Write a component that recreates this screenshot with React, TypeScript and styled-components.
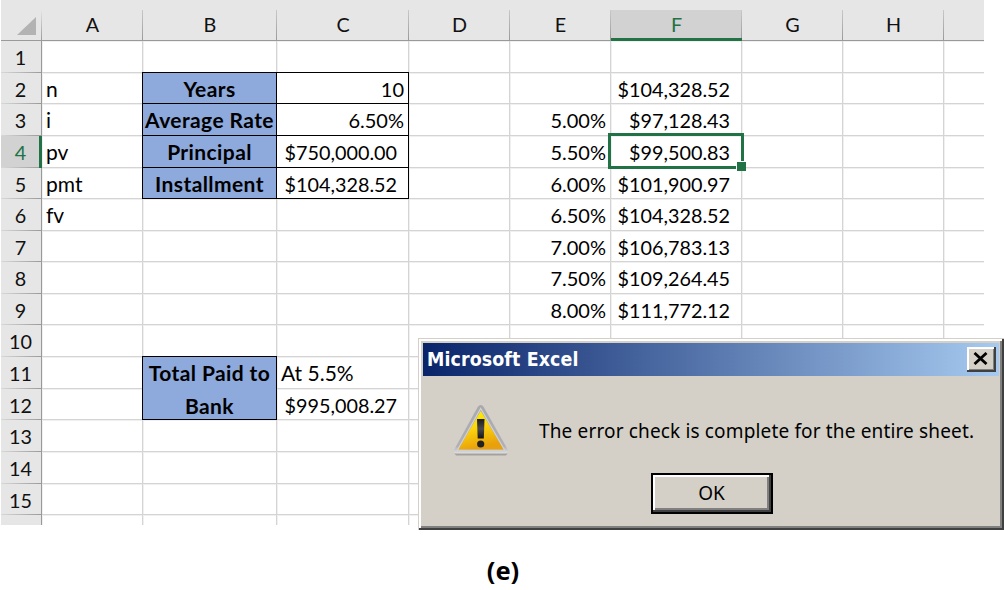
import React from "react";
import styled, { createGlobalStyle, css } from "styled-components";

const GlobalStyle = createGlobalStyle`
  body { margin: 0; background: #fff; }
  * { box-sizing: border-box; }
`;

const GREEN = "#217346";
const LINE = "#d4d4d4";

const Page = styled.main`
  position: relative;
  width: 1004px;
  height: 590px;
  overflow: hidden;
  background: #fff;
  font-family: Lato, "Liberation Sans", sans-serif;
  color: #000;
`;

const Sheet = styled.div`
  display: grid;
  width: 983px;
  margin-left: 1px;
  grid-template-columns: 41px 101px 134px 132px 101px 101px 131px 101px 101px 40px;
  grid-template-rows: 41px 32px 31px 32px 32px 31px 32px 31px 32px 31px 32px 32px 31px 32px 32px 31px 10px;
  font-size: 19.8px;
  line-height: 24px;
`;

const Corner = styled.div`
  display: flex;
  justify-content: flex-end;
  align-items: flex-end;
  padding: 0 5px 5px 0;
  background: #e6e6e6;
  border-right: 1px solid #a6a6a6;
  border-bottom: 1px solid #999;
  border-image: linear-gradient(to bottom, #e6e6e6 25%, #999) 1;
`;

const ColumnHead = styled.div<{ $active?: boolean; $last?: boolean }>`
  display: flex;
  align-items: center;
  justify-content: center;
  padding: 6px 0 0 0;
  background:
    linear-gradient(${(p) => (p.$active ? GREEN : "#999")} 0 0) bottom / 100% ${(p) => (p.$active ? 3 : 1)}px no-repeat,
    linear-gradient(to bottom, #c8c8c8, #999) right bottom / ${(p) => (p.$last ? 0 : 1)}px 31px no-repeat,
    linear-gradient(${(p) => (p.$active ? "#d2d2d2" : "#e6e6e6")} 0 0) bottom / 100% 31px no-repeat,
    #e6e6e6;
  color: ${(p) => (p.$active ? GREEN : "#111")};
`;

const RowHead = styled.div<{ $active?: boolean; $last?: boolean }>`
  display: flex;
  align-items: center;
  justify-content: center;
  padding: 0 2px 0 0;
  background:
    linear-gradient(${(p) => (p.$active ? GREEN : "#999")} 0 0) right / ${(p) => (p.$active ? 3 : 1)}px 100% no-repeat,
    linear-gradient(to right, #d8d8d8, #999) bottom / 100% ${(p) => (p.$last ? 0 : 1)}px no-repeat,
    ${(p) => (p.$active ? "#d2d2d2" : "#e6e6e6")};
  color: ${(p) => (p.$active ? GREEN : "#111")};
`;

type Kind = "text" | "number" | "money" | "label";

const kinds = {
  text: css`
    justify-content: flex-start;
    padding-left: 4px;
    font-size: 21px;
  `,
  number: css`
    justify-content: flex-end;
    padding-right: 4px;
    font-size: 20px;
  `,
  money: css`
    justify-content: flex-end;
    padding-right: 11px;
  `,
  label: css`
    justify-content: center;
    text-align: center;
    background: #8ea9db;
    font-weight: 700;
    font-size: 21px;
    letter-spacing: 0.4px;
  `,
};

const Cell = styled.div<{ $row: number; $col: number; $span?: number; $kind: Kind; $boxed?: boolean; $edge?: boolean }>`
  position: relative;
  grid-row: ${(p) => p.$row + 1} / span ${(p) => p.$span ?? 1};
  grid-column: ${(p) => p.$col + 1};
  display: flex;
  align-items: center;
  padding-top: ${(p) => (p.$span ? 2 : 1)}px;
  white-space: nowrap;
  line-height: ${(p) => (p.$span ? 33 : 24)}px;
  border-right: ${(p) => (p.$edge ? 0 : 1)}px solid ${LINE};
  border-bottom: ${(p) => (p.$row === 16 ? 0 : 1)}px solid ${LINE};
  box-shadow: inset 1px 1px #f0f0f0;
  ${(p) => kinds[p.$kind]}
  ${(p) =>
    p.$boxed &&
    css`
      z-index: 1;
      border-color: #000;
      box-shadow: -1px 0 #000, 0 -1px #000, -1px -1px #000;
    `}
`;

const Selection = styled.div`
  position: absolute;
  z-index: 1;
  inset: -3px -3px -2px -3px;
  border: 3px solid ${GREEN};

  &::after {
    content: "";
    position: absolute;
    right: -5px;
    bottom: -5px;
    width: 9px;
    height: 9px;
    background: ${GREEN};
    box-shadow: -1px -1px #fff, -1px 0 #fff, 0 -1px #fff;
  }
`;

const Dialog = styled.section`
  position: absolute;
  z-index: 2;
  left: 418px;
  top: 338px;
  width: 586px;
  height: 192px;
  padding: 5px;
  background: #d4d0c8;
  box-shadow:
    inset 1px 1px #d4d0c8,
    inset -2px -2px #404040,
    inset 3px 3px #fff,
    inset -4px -4px #808080;
`;

const TitleBar = styled.header`
  display: flex;
  align-items: center;
  justify-content: space-between;
  height: 33px;
  width: 576px;
  padding: 0 3px 0 4px;
  background: linear-gradient(to right, #0a246a, #a6caf0);
`;

const Title = styled.h1`
  margin: 0;
  font: 700 19.4px/24px "DejaVu Sans", sans-serif;
  font-stretch: condensed;
  letter-spacing: 0.1px;
  color: #fff;
`;

const CloseButton = styled.button`
  display: grid;
  place-items: center;
  width: 29px;
  height: 25px;
  padding: 0 2px 2px 0;
  border: 0;
  background: #d4d0c8;
  box-shadow:
    inset -2px -2px #404040,
    inset 2px 2px #fff,
    inset -3px -3px #808080;
`;

const DialogBody = styled.div`
  display: flex;
  align-items: center;
  height: 98px;
  padding: 10px 0 0 28px;
`;

const Message = styled.p`
  margin: 2px 0 0 30px;
  font: 19px/26px "Noto Sans", sans-serif;
  letter-spacing: 0.15px;
  white-space: nowrap;
`;

const OkButton = styled.button`
  display: block;
  width: 122px;
  height: 41px;
  margin: -1px 0 0 228px;
  padding: 0 1px 2px 0;
  border: 2px solid #000;
  background: #d4d0c8;
  box-shadow:
    inset -2px -2px #404040,
    inset 2px 2px #fff,
    inset -4px -4px #808080;
  font: 19px/26px "Noto Sans", sans-serif;
  color: #000;
`;

const Caption = styled.p`
  margin: 28px 0 0 1px;
  width: 1004px;
  text-align: center;
  font: 700 25.5px/34px "Noto Sans", sans-serif;
`;

function WarningIcon() {
  return (
    <svg width="58" height="52" viewBox="0 0 58 52">
      <defs>
        <linearGradient id="fill" x1="0" y1="0" x2="0.3" y2="1">
          <stop offset="0" stopColor="#fff200" />
          <stop offset="0.5" stopColor="#fcd60a" />
          <stop offset="1" stopColor="#e8a00c" />
        </linearGradient>
        <linearGradient id="rim" x1="0" y1="0" x2="0" y2="1">
          <stop offset="0" stopColor="#a9a9ad" />
          <stop offset="0.85" stopColor="#b0b0b4" />
          <stop offset="1" stopColor="#e0e0e2" />
        </linearGradient>
        <linearGradient id="mark" x1="0" y1="0" x2="0" y2="1">
          <stop offset="0" stopColor="#1c1c1c" />
          <stop offset="0.5" stopColor="#4a4a4a" />
          <stop offset="1" stopColor="#141414" />
        </linearGradient>
      </defs>
      <path d="M3 48.5 H57 L55 51.5 H5Z" fill="#a5a29c" />
      <path d="M29.700 1 Q31.500 1 32.700 3 L57 46 Q58 49.500 55 49.500 H5 Q2 49.500 3 46 L26.700 3 Q28 1 29.700 1Z" fill="url(#rim)" />
      <path d="M29.700 4.500 L54 47 H6Z" fill="none" stroke="#d2d2d6" strokeWidth="1.200" />
      <path d="M29.700 7 L52.500 45.500 H7.500Z" fill="url(#fill)" />
      <path d="M26 15 H33.500 L32.800 34.500 H26.700Z" fill="url(#mark)" />
      <ellipse cx="29.700" cy="40" rx="3.600" ry="3.500" fill="#222" />
    </svg>
  );
}

type Entry = { row: number; col: number; kind: Kind; value: React.ReactNode; boxed?: boolean; span?: number };

const entries: Entry[] = [
  ...["n", "i", "pv", "pmt", "fv"].map((value, i): Entry => ({ row: i + 2, col: 1, kind: "text", value })),
  ...["Years", "Average Rate", "Principal", "Installment"].map(
    (value, i): Entry => ({ row: i + 2, col: 2, kind: "label", value, boxed: true }),
  ),
  { row: 2, col: 3, kind: "number", value: "10", boxed: true },
  { row: 3, col: 3, kind: "number", value: "6.50%", boxed: true },
  { row: 4, col: 3, kind: "money", value: "$750,000.00", boxed: true },
  { row: 5, col: 3, kind: "money", value: "$104,328.52", boxed: true },
  ...["5.00%", "5.50%", "6.00%", "6.50%", "7.00%", "7.50%", "8.00%"].map(
    (value, i): Entry => ({ row: i + 3, col: 5, kind: "number", value }),
  ),
  ...[
    "$104,328.52", "$97,128.43", "$99,500.83", "$101,900.97",
    "$104,328.52", "$106,783.13", "$109,264.45", "$111,772.12",
  ].map((value, i): Entry => ({ row: i + 2, col: 6, kind: "money", value })),
  { row: 11, col: 2, kind: "label", value: <>Total Paid to<br />Bank</>, boxed: true, span: 2 },
  { row: 11, col: 3, kind: "text", value: "At 5.5%" },
  { row: 12, col: 3, kind: "money", value: "$995,008.27" },
];

const columns = ["A", "B", "C", "D", "E", "F", "G", "H", ""];
const rows = Array.from({ length: 16 }, (_, i) => i + 1);

export default function App() {
  return (
    <Page>
      <GlobalStyle />
      <Sheet>
        <Corner>
          <svg width="19" height="18" viewBox="0 0 19 18">
            <path d="M19 0V18H0Z" fill="#b3b3b3" />
          </svg>
        </Corner>
        {columns.map((name, i) => (
          <ColumnHead key={i} $active={name === "F"} $last={i === 8}>
            {name}
          </ColumnHead>
        ))}
        {rows.map((row) => (
          <React.Fragment key={row}>
            <RowHead $active={row === 4} $last={row === 16} style={{ gridRow: row + 1, gridColumn: 1 }}>
              {row < 16 ? row : ""}
            </RowHead>
            {columns.map((_, i) => {
              const col = i + 1;
              if (row === 12 && col === 2) return null;
              const entry = entries.find((e) => e.row === row && e.col === col);
              return (
                <Cell
                  key={col}
                  $row={row}
                  $col={col}
                  $span={entry?.span}
                  $kind={entry?.kind ?? "text"}
                  $boxed={entry?.boxed}
                  $edge={col === 9}
                >
                  {entry && <span>{entry.value}</span>}
                  {row === 4 && col === 6 && <Selection />}
                </Cell>
              );
            })}
          </React.Fragment>
        ))}
      </Sheet>
      <Caption>(e)</Caption>
      <Dialog>
        <TitleBar>
          <Title>Microsoft Excel</Title>
          <CloseButton aria-label="Close">
            <svg width="15" height="13" viewBox="0 0 15 13">
              <path d="M1.500 1 L13.500 12 M13.500 1 L1.500 12" stroke="#000" strokeWidth="2.800" />
            </svg>
          </CloseButton>
        </TitleBar>
        <DialogBody>
          <WarningIcon />
          <Message>The error check is complete for the entire sheet.</Message>
        </DialogBody>
        <OkButton>OK</OkButton>
      </Dialog>
    </Page>
  );
}
